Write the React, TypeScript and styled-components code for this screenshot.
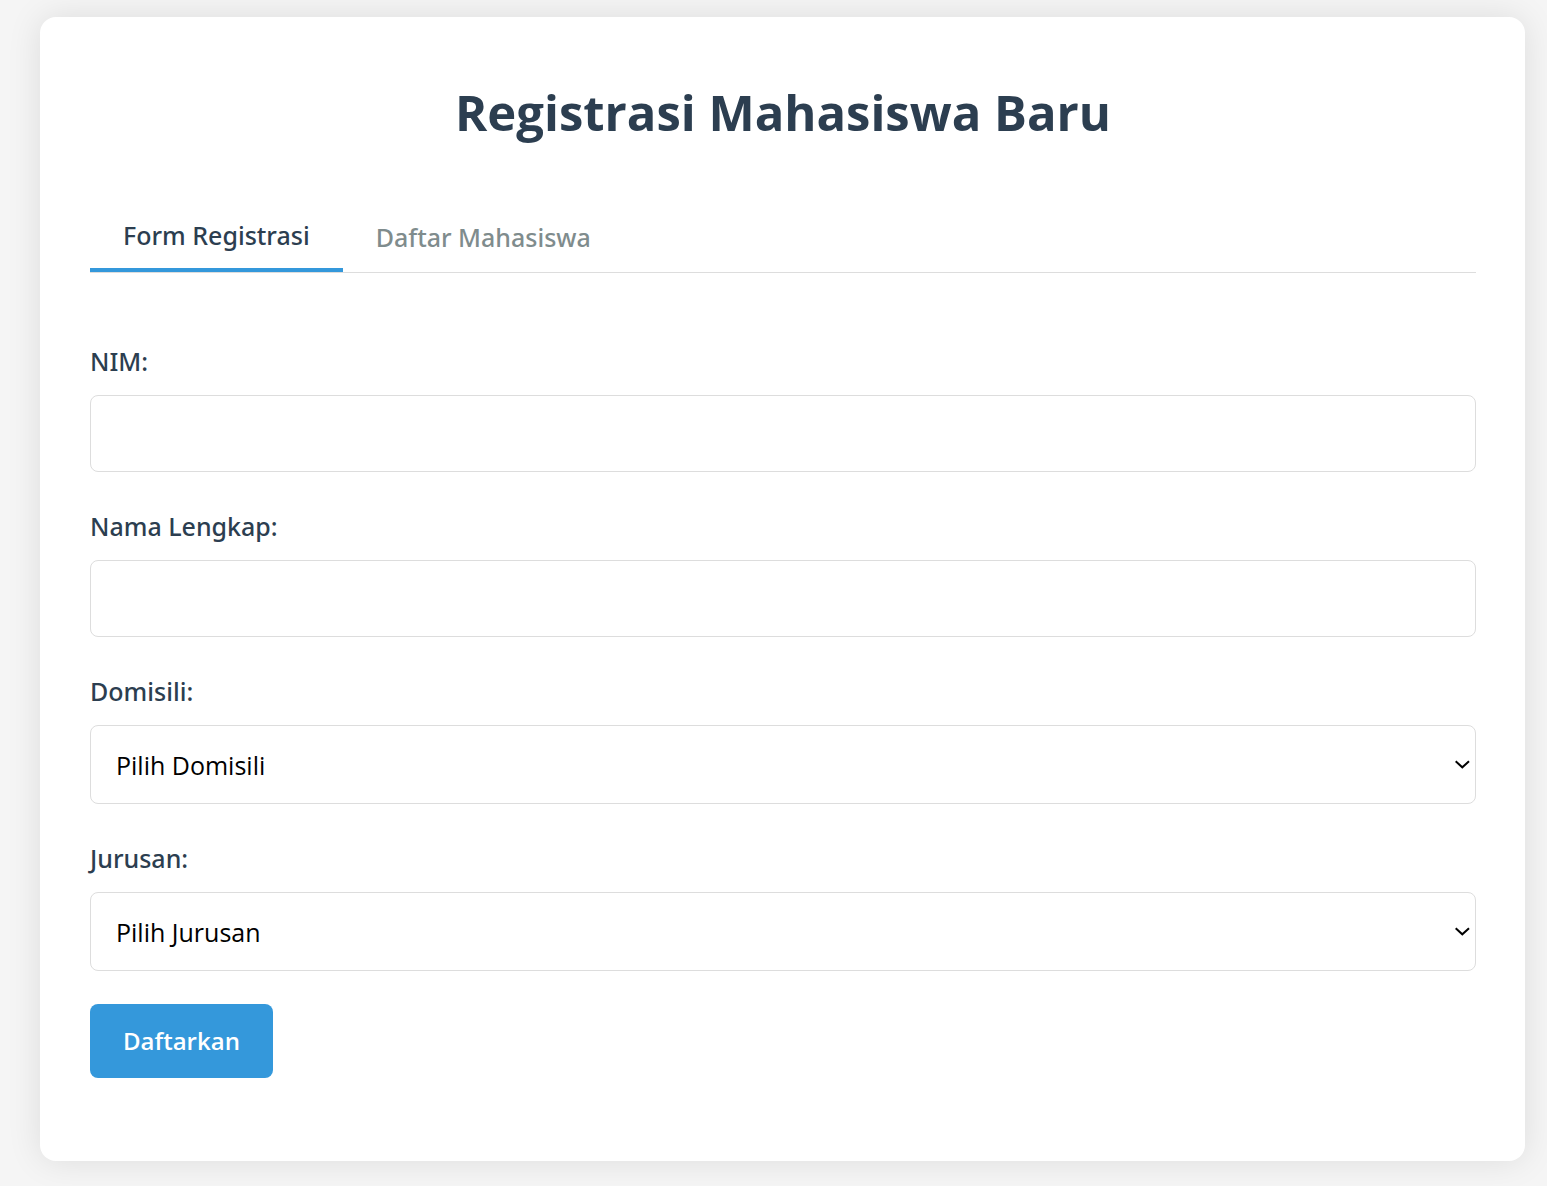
import React, { useState } from "react";
import styled, { createGlobalStyle } from "styled-components";

const mediumFont = `"Noto Sans", "Open Sans", sans-serif`;

const GlobalStyle = createGlobalStyle`
  * { box-sizing: border-box; }
  body {
    margin: 0;
    background: #f5f5f5;
    color: #2c3e50;
    font-family: "Open Sans", "Noto Sans", sans-serif;
    font-size: 25px;
    line-height: 42px;
  }
`;

const Page = styled.div`
  padding: 17px 22px 25px 40px;
`;

const Card = styled.main`
  padding: 51px 49px 83px 50px;
  background: #fff;
  border-radius: 16px;
  box-shadow: 0 0 34px rgba(0, 0, 0, 0.1);
`;

const Title = styled.h1`
  margin: 0 0 49px;
  text-align: center;
  font-size: 49px;
  line-height: 88px;
  font-weight: 700;
`;

const Tabs = styled.div`
  display: flex;
  height: 68px;
  margin-bottom: 67px;
  border-bottom: 1px solid #ddd;
`;

const Tab = styled.button<{ $active: boolean }>`
  padding: 0 33px 4px;
  border: 0;
  border-bottom: ${(p) => (p.$active ? "4px solid #3498db" : "0")};
  background: none;
  color: ${(p) => (p.$active ? "#2c3e50" : "#7f8c8d")};
  font: inherit;
  font-family: ${mediumFont};
  font-weight: 500;
  cursor: pointer;
`;

const Form = styled.form`
  display: flex;
  flex-direction: column;
  align-items: flex-start;
  gap: 33px;
`;

const Field = styled.div`
  display: flex;
  flex-direction: column;
  align-self: stretch;
  gap: 13px;
`;

const Label = styled.label`
  font-family: ${mediumFont};
  font-weight: 500;
`;

const Input = styled.input`
  height: 77px;
  padding: 0 26px;
  border: 1px solid #ddd;
  border-radius: 8px;
  font: inherit;
`;

const SelectBox = styled.div`
  display: grid;
  align-items: center;

  > * { grid-area: 1 / 1; }

  svg {
    justify-self: end;
    margin-right: 6px;
    pointer-events: none;
  }
`;

const Select = styled.select`
  width: 100%;
  height: 79px;
  padding: 0 25px;
  border: 1px solid #ddd;
  border-radius: 8px;
  appearance: none;
  background: #fff;
  color: #000;
  font: inherit;
`;

const Submit = styled.button`
  height: 74px;
  padding: 0 33px;
  border: 0;
  border-radius: 8px;
  background: #3498db;
  color: #fff;
  font: inherit;
  font-size: 24px;
  font-weight: 600;
  cursor: pointer;
`;

function SelectField({ id, label, placeholder }: { id: string; label: string; placeholder: string }) {
  return (
    <Field>
      <Label htmlFor={id}>{label}</Label>
      <SelectBox>
        <Select id={id} defaultValue="">
          <option value="">{placeholder}</option>
        </Select>
        <svg width="15" height="10" viewBox="0 0 15 10" fill="none" stroke="#000" strokeWidth="2" aria-hidden="true">
          <path d="M0.7 1.3 L7.3 7.3 L14 1.3" />
        </svg>
      </SelectBox>
    </Field>
  );
}

export default function App() {
  const [tab, setTab] = useState("form");
  return (
    <Page>
      <GlobalStyle />
      <Card>
        <Title>Registrasi Mahasiswa Baru</Title>
        <Tabs role="tablist">
          <Tab type="button" role="tab" aria-selected={tab === "form"} $active={tab === "form"} onClick={() => setTab("form")}>
            Form Registrasi
          </Tab>
          <Tab type="button" role="tab" aria-selected={tab === "list"} $active={tab === "list"} onClick={() => setTab("list")}>
            Daftar Mahasiswa
          </Tab>
        </Tabs>
        <Form onSubmit={(e) => e.preventDefault()}>
          <Field>
            <Label htmlFor="nim">NIM:</Label>
            <Input id="nim" type="text" />
          </Field>
          <Field>
            <Label htmlFor="nama">Nama Lengkap:</Label>
            <Input id="nama" type="text" />
          </Field>
          <SelectField id="domisili" label="Domisili:" placeholder="Pilih Domisili" />
          <SelectField id="jurusan" label="Jurusan:" placeholder="Pilih Jurusan" />
          <Submit type="submit">Daftarkan</Submit>
        </Form>
      </Card>
    </Page>
  );
}
